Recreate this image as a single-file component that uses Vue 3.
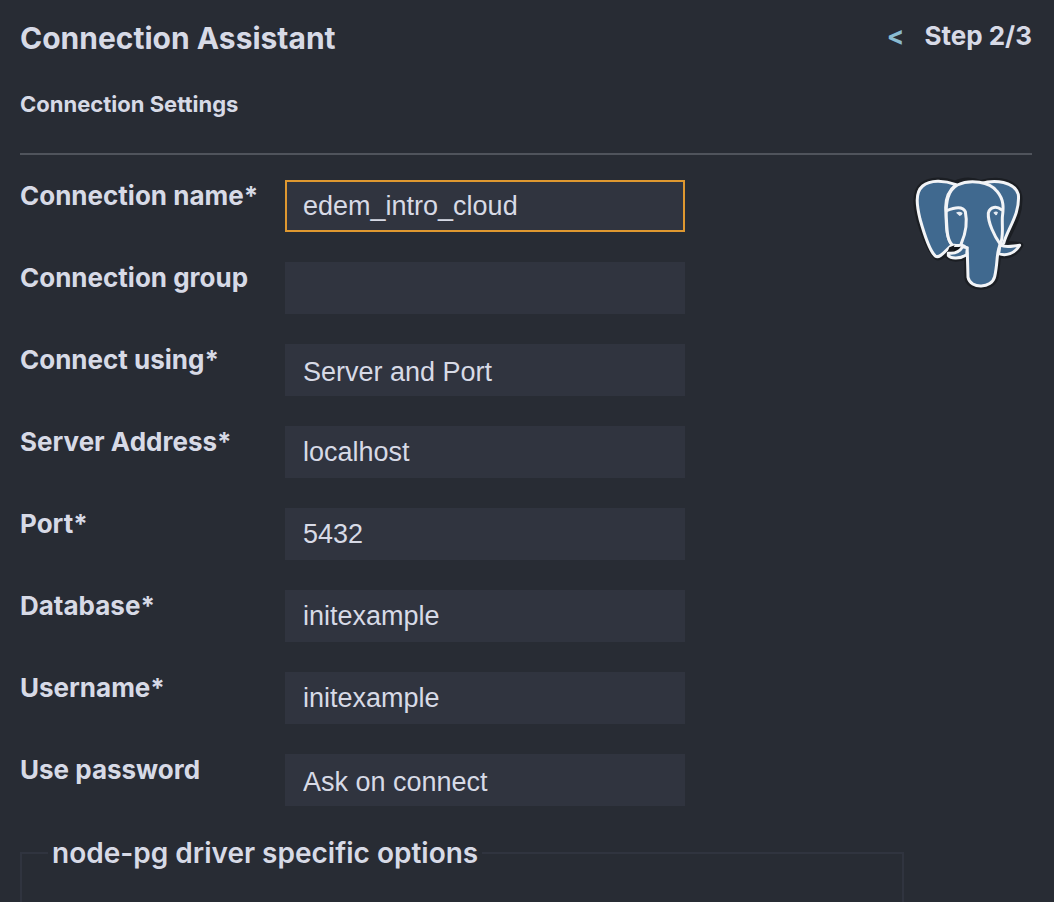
<script setup>
import { ref } from 'vue'

const fields = ref([
  { id: 'name', label: 'Connection name*', type: 'text', value: 'edem_intro_cloud', active: true },
  { id: 'group', label: 'Connection group', type: 'text', value: '' },
  { id: 'using', label: 'Connect using*', type: 'select', value: 'Server and Port', options: ['Server and Port', 'Connection String', 'Socket File'] },
  { id: 'server', label: 'Server Address*', type: 'text', value: 'localhost' },
  { id: 'port', label: 'Port*', type: 'text', value: '5432' },
  { id: 'database', label: 'Database*', type: 'text', value: 'initexample' },
  { id: 'username', label: 'Username*', type: 'text', value: 'initexample' },
  { id: 'password', label: 'Use password', type: 'select', value: 'Ask on connect', options: ['Ask on connect', 'Save password', 'Use empty password'] }
])
</script>

<template>
  <main class="assistant">
    <header class="header">
      <h1>Connection Assistant</h1>
      <nav class="steps">
        <a href="#" class="back" aria-label="Previous step">&lt;</a>
        <span>Step 2/3</span>
      </nav>
    </header>
    <h2>Connection Settings</h2>
    <hr />
    <form class="settings" @submit.prevent>
      <div class="top">
        <div class="fields">
          <div v-for="f in fields" :key="f.id" class="row">
            <label :for="f.id">{{ f.label }}</label>
            <select v-if="f.type === 'select'" :id="f.id" v-model="f.value" class="control">
              <option v-for="o in f.options" :key="o">{{ o }}</option>
            </select>
            <input v-else :id="f.id" v-model="f.value" type="text" class="control" :class="{ active: f.active }" spellcheck="false" />
          </div>
        </div>
        <svg class="logo" viewBox="36 30 360 360" role="img" aria-label="PostgreSQL">
          <g fill="#111316" stroke="#1b1e23" stroke-width="20" stroke-linejoin="round">
            <path d="M166 57C130 44 92 43 68 61C43 81 48 122 58 160C70 203 86 252 112 276C126 279 143 252 157 241L142 270C158 286 184 280 203 270L203 338C207 372 276 375 286 336L294 268C320 276 348 265 360 241L312 237C328 198 362 152 357 94C348 51 298 40 244 55C213 44 188 45 166 57Z" />
          </g>
          <g fill="#40698f" stroke="#f2f4f7" stroke-width="9" stroke-linecap="round" stroke-linejoin="round">
            <path d="M168 59C132 45 90 44 68 63C44 83 51 124 60 162C72 205 91 260 106 273C120 284 138 252 157 240C139 222 139 184 138 143C134 108 144 78 168 59Z" />
            <path d="M242 56C285 42 344 50 355 88C361 147 322 192 311 235L301 239C287 219 263 165 267 144C272 126 289 132 304 135C311 104 288 74 242 56Z" />
            <path d="M157 240C140 223 141 190 139 158C137 111 143 77 172 60C211 42 269 50 291 79C312 104 311 127 307 157C306 190 311 214 301 239C289 257 294 291 284 335C276 371 211 373 204 337L202 264C201 246 195 243 184 240C174 242 166 243 157 240Z" />
            <path d="M140 137C157 130 186 119 196 140C204 178 197 205 184 235" fill="none" />
            <path d="M304 134C291 123 270 124 265 144C263 171 283 214 301 238" fill="none" />
            <path d="M145 264C167 267 180 258 188 245L202 248L200 269C180 282 153 282 145 272Z" />
            <path d="M300 240C321 250 338 242 359 241C344 266 318 274 296 266Z" />
          </g>
          <path d="M168 143Q178 137 188 144Q186 152 179 153ZM280 143Q288 136 294 142Q292 151 287 151Z" fill="#e5ebf3" />
          <path d="M148 247L164 241L158 254L143 260Z" fill="#17191d" />
        </svg>
      </div>
      <fieldset>
        <legend>node-pg driver specific options</legend>
      </fieldset>
    </form>
  </main>
</template>

<style>
body {
  margin: 0;
  background: #282c34;
  overflow: hidden;
}
</style>

<style scoped>
.assistant {
  box-sizing: border-box;
  padding: 20px 22px 0 20px;
  color: #d7dae6;
  font-family: Inter, "Liberation Sans", sans-serif;
  font-weight: 700;
}
.header {
  display: flex;
  justify-content: space-between;
  align-items: flex-start;
}
h1 {
  margin: 0;
  font-size: 30px;
  font-weight: 700;
  line-height: 36px;
}
.steps {
  display: flex;
  gap: 20px;
  font-size: 26px;
  line-height: 32px;
}
.back {
  color: #8abbd0;
  text-decoration: none;
}
h2 {
  margin: 34px 0 0;
  font-size: 22px;
  font-weight: 700;
  line-height: 28px;
}
hr {
  height: 2px;
  margin: 35px 0 0;
  border: 0;
  background: #50545c;
}
.top {
  display: flex;
  justify-content: space-between;
  align-items: flex-start;
  padding-top: 20px;
}
.fields {
  display: grid;
  gap: 30px;
  padding-top: 5px;
}
.row {
  display: grid;
  grid-template-columns: 265px 400px;
  align-items: start;
}
label {
  font-size: 26px;
  line-height: 32px;
}
.control {
  box-sizing: border-box;
  width: 100%;
  height: 52px;
  margin: 0;
  padding: 0 16px;
  border: 2px solid #30343f;
  border-radius: 0;
  outline: 0;
  appearance: none;
  background: #30343f;
  color: #d7dae6;
  font: 27px "Liberation Sans", Arial, sans-serif;
}
select.control {
  padding-top: 4px;
}
.control.active {
  border-color: #df9830;
}
.logo {
  flex: none;
  width: 120px;
  height: 120px;
}
fieldset {
  box-sizing: border-box;
  width: 884px;
  max-width: 100%;
  min-height: 100px;
  margin: 29px 0 0;
  padding: 0 26px;
  border: 2px solid #30343f;
}
legend {
  padding: 0 4px;
  font-size: 28px;
  font-weight: 600;
  line-height: 36px;
}
</style>
